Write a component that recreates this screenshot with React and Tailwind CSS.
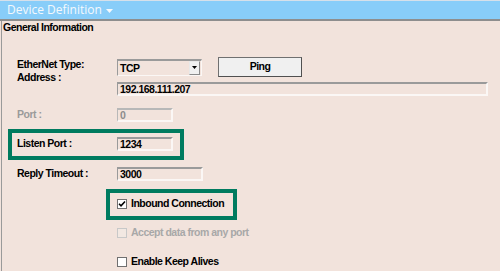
import React from "react";

const Input = ({ w, value, disabled }) => (
  <div
    className={`h-[14px] border-t-2 border-l border-r-2 border-b-2 ${
      disabled ? "border-t-[#b8b8b8] border-l-[#b8b8b8] text-[#8c8c8c]" : "border-t-[#9a9a9a] border-l-[#9a9a9a] text-black"
    } border-r-[#fbf7f5] border-b-[#fbf7f5] pl-[2px] leading-[11px] ${w}`}
  >
    {value}
  </div>
);

const Check = ({ checked, disabled }) => (
  <div
    className={`w-[10px] h-[10px] border ${
      disabled ? "border-[#c8c8c8] bg-[#f2e8e2]" : "border-[#707070] bg-white"
    } flex items-center justify-center shrink-0`}
  >
    {checked && (
      <svg width="8" height="8" viewBox="0 0 8 8">
        <path d="M1 3.8 L3 5.8 L7 1.5" stroke="#000" strokeWidth="1.6" fill="none" />
      </svg>
    )}
  </div>
);

export default function App() {
  return (
    <div
      className="w-[500px] h-[271px] bg-[#f2e3dc] overflow-hidden text-[10.5px] font-bold tracking-[-0.5px]"
      style={{ fontFamily: '"Liberation Sans", Arial, sans-serif' }}
    >
      {/* Header */}
      <div className="h-[21px] border-t border-t-[#d6e0ea] border-b-2 border-b-[#8e8e8e] bg-[#88cdf9] flex items-center pl-[7px]">
        <span
          className="text-[#f4f9fd] text-[12px] font-normal tracking-[0px] leading-[18px]"
          style={{ fontFamily: '"Open Sans", "Noto Sans", sans-serif' }}
        >
          Device Definition
        </span>
        <svg width="7" height="4" viewBox="0 0 7 4" className="ml-[4px] mt-[1px]">
          <path d="M0 0 L7 0 L3.5 4 Z" fill="#f4f9fd" />
        </svg>
      </div>

      {/* Body */}
      <div className="h-[250px] border-l border-l-[#9a9a9a] ml-[1px] text-black">
        <div className="leading-[12px] pl-[1px]">General Information</div>

        {/* EtherNet Type */}
        <div className="mt-[24px] h-[20px] flex items-center pl-[15px]">
          <div className="w-[100px] leading-[10px] -mt-[7px]">EtherNet Type:</div>
          <div className="w-[85px] h-[17px] border-t-2 border-l border-[#9a9a9a] border-r border-b border-r-[#fbf7f5] border-b-[#fbf7f5] flex items-center">
            <div className="flex-1 pl-[2px] leading-[12px]">TCP</div>
            <div className="w-[11px] h-[14px] bg-[#f0f0f0] border border-[#8a8a8a] border-t-[#e8e8e8] border-l-[#e8e8e8] flex items-center justify-center mr-[1px]">
              <svg width="5" height="3" viewBox="0 0 5 3">
                <path d="M0 0 L5 0 L2.5 3 Z" fill="#000" />
              </svg>
            </div>
          </div>
          <div className="ml-[16px] w-[84px] h-[20px] bg-[#f0f0f0] border border-[#707070] border-r-[#505050] border-b-[#505050] flex items-center justify-center">
            Ping
          </div>
        </div>

        {/* Address */}
        <div className="mt-[5px] flex items-start pl-[15px]">
          <div className="w-[100px] leading-[10px] -mt-[10px]">Address :</div>
          <Input w="w-[371px]" value="192.168.111.207" />
        </div>

        {/* Port */}
        <div className="mt-[11px] flex items-center pl-[15px]">
          <div className="w-[100px] text-[#9a9a9a]">Port :</div>
          <Input w="w-[56px]" value="0" disabled />
        </div>

        {/* Listen Port (highlighted) */}
        <div className="mt-[6px] ml-[6px] w-[176px] h-[31px] border-4 border-[#007b5f] flex items-center pl-[5px]">
          <div className="w-[100px]">Listen Port :</div>
          <Input w="w-[56px]" value="1234" />
        </div>

        {/* Reply Timeout */}
        <div className="mt-[6px] flex items-center pl-[15px]">
          <div className="w-[100px]">Reply Timeout :</div>
          <Input w="w-[86px]" value="3000" />
        </div>

        {/* Inbound Connection (highlighted) */}
        <div className="mt-[7px] ml-[104px] w-[131px] h-[31px] border-4 border-[#007b5f] flex items-center pl-[7px] gap-[4px]">
          <Check checked />
          <div>Inbound Connection</div>
        </div>

        {/* Accept data */}
        <div className="mt-[8px] ml-[115px] flex items-center gap-[4px] h-[10px]">
          <Check disabled />
          <div className="text-[#a8a8a8]">Accept data from any port</div>
        </div>

        {/* Enable Keep Alives */}
        <div className="mt-[19px] ml-[115px] flex items-center gap-[4px] h-[10px]">
          <Check />
          <div>Enable Keep Alives</div>
        </div>
      </div>
    </div>
  );
}
